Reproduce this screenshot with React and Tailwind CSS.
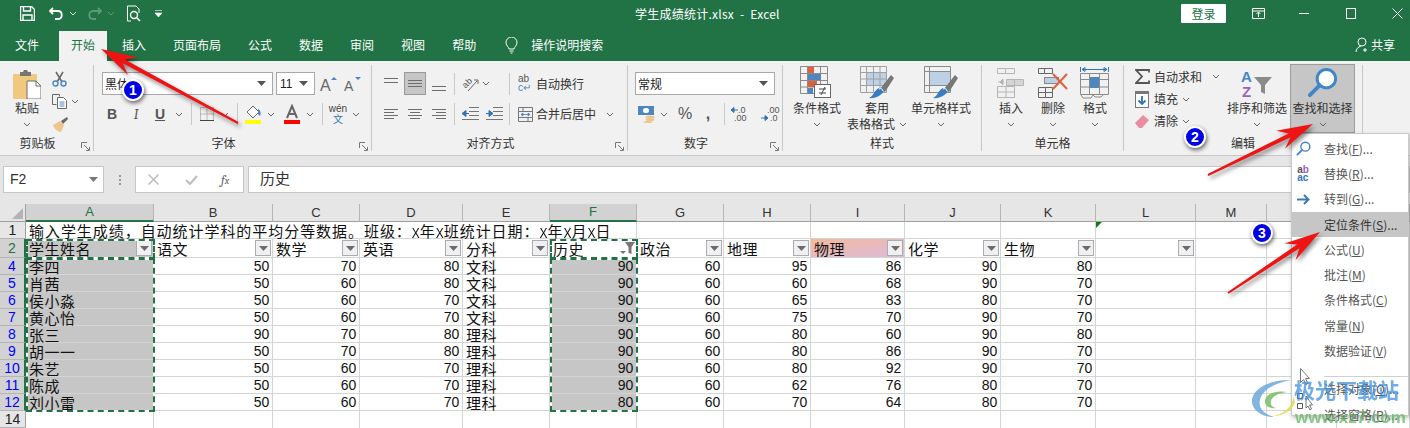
import React from 'react';

const Chev = ({ c = '#666' }) => (
  <svg width="8" height="5" viewBox="0 0 8 5"><path d="M1 1l3 3 3-3" fill="none" stroke={c} strokeWidth="1" /></svg>
);

const Tri = ({ c = '#6a6a6a' }) => (
  <svg width="9" height="5" viewBox="0 0 9 5"><path d="M0 0h9L4.500 5z" fill={c} /></svg>
);

// icon box of a fixed width, centres what is inside it
const Box = ({ w, className = '', children }) => (
  <div className={`flex items-center justify-center h-[22px] shrink-0 ${className}`} style={{ width: w }}>{children}</div>
);

const Sep = ({ className = '' }) => <div className={`w-px h-[22px] bg-[#c8c8c8] shrink-0 ${className}`} />;

const Lines = ({ rows }) => (
  <svg width="16" height="16" viewBox="0 0 16 16">
    {rows.map(([x, y, l]) => <rect key={y} x={x} y={y} width={l} height="1" fill="#6e6e6e" />)}
  </svg>
);

const Launcher = () => (
  <div className="absolute right-[3px] bottom-0">
    <svg width="9" height="9" viewBox="0 0 9 9">
      <path d="M.5 6V.5H6M3 3l5 5M5 8.500h3.500V5" fill="none" stroke="#777" />
    </svg>
  </div>
);

function Group({ w, label, launcher, children }) {
  return (
    <div className="relative flex flex-col h-[86px] border-r border-[#c6c6c6] shrink-0" style={{ width: w }}>
      <div className="flex-1 min-h-0">{children}</div>
      <div className={`h-[16px] leading-[16px] text-center text-[12px] text-[#333] pb-[2px] ${launcher ? 'pr-[18px]' : ''}`}>{label}</div>
      {launcher && <Launcher />}
    </div>
  );
}

function BigBtn({ w, icon, label, label2, className = '' }) {
  return (
    <div className={`flex flex-col items-center shrink-0 ${className}`} style={{ width: w }}>
      <div className="h-[35px] flex items-center justify-center">{icon}</div>
      <div className="h-[16px] leading-[16px] text-[12px] text-[#333] whitespace-nowrap">{label}</div>
      <div className="h-[16px] flex items-center justify-center text-[12px] leading-[16px] text-[#333] gap-[4px] whitespace-nowrap">
        {label2}
        <Chev />
      </div>
    </div>
  );
}

/* ---------- ribbon icons ---------- */
const PasteIcon = () => (
  <svg width="28" height="29" viewBox="0 0 28 29">
    <rect x="0" y="4" width="24" height="25" rx="1" fill="#f0c87e" />
    <path d="M7 4V2h3l1-2h3l1 2h3v4H7z" fill="#767676" />
    <path d="M14 11h9l5 5v13H14z" fill="#fff" stroke="#6e6e6e" />
    <path d="M23 11v5h5" fill="none" stroke="#6e6e6e" />
  </svg>
);
const ScissorsIcon = () => (
  <svg width="15" height="16" viewBox="0 0 15 16">
    <path d="M4 1l6 10M11 1L5 11" stroke="#666" strokeWidth="1.500" fill="none" />
    <circle cx="3.500" cy="12.500" r="2.500" fill="none" stroke="#4e86c0" strokeWidth="1.400" />
    <circle cx="11.500" cy="12.500" r="2.500" fill="none" stroke="#4e86c0" strokeWidth="1.400" />
  </svg>
);
const CopyIcon = () => (
  <svg width="16" height="15" viewBox="0 0 16 15">
    <path d="M.5.500h7v2M.5.500v10h4" fill="none" stroke="#666" />
    <path d="M5.500 3.500h6l3 3v8h-9z" fill="#fff" stroke="#666" />
    <path d="M7.500 8h5M7.500 10h5M7.500 12h5" stroke="#4e86c0" />
  </svg>
);
const BrushIcon = () => (
  <svg width="16" height="15" viewBox="0 0 16 15">
    <path d="M9 4L15 0l1 2-5 5z" fill="#666" />
    <path d="M1 8l7-4 4 4-3 7c-3 0-7-3-8-7z" fill="#eec58a" />
  </svg>
);
const GrowA = ({ up }) => (
  <svg className="overflow-visible" width="20" height="16" viewBox="0 0 20 16">
    <text x="1" y="15" fontSize={up ? 16 : 14} fontFamily="Liberation Sans" fill="#666">A</text>
    <path d={up ? 'M12 4l3-3 3 3z' : 'M12 1h6l-3 3z'} fill="#4e86c0" />
  </svg>
);
const FillIcon = () => (
  <svg width="17" height="20" viewBox="0 0 17 20">
    <path d="M2 8l6-6 6 6-6 6z" fill="#fff" stroke="#666" />
    <path d="M13 5c3 1 3 5 2 7l-2-2z" fill="#4e86c0" />
    <rect x="0" y="16" width="16" height="4" fill="#ffff00" />
  </svg>
);
const FontColorIcon = () => (
  <svg width="16" height="20" viewBox="0 0 16 20">
    <path d="M3 14L8 2l5 12M5 10h6" fill="none" stroke="#666" strokeWidth="2" />
    <rect x="0" y="16" width="16" height="4" fill="#ff0000" />
  </svg>
);
const BorderIcon = () => (
  <svg width="14" height="14" viewBox="0 0 14 14">
    <path d="M.5.500h13v13H.5zM7 .500v13M.5 7h13" fill="none" stroke="#888" strokeDasharray="1 1" />
    <path d="M0 13.500h14" stroke="#444" />
  </svg>
);
const OrientIcon = () => (
  <svg className="overflow-visible" width="17" height="17" viewBox="0 0 17 17">
    <text x="0" y="11" fontSize="9" fontFamily="Liberation Sans" fill="#555" transform="rotate(-45 5 8)">ab</text>
    <path d="M6 16L15 6M12 5h4v4" fill="none" stroke="#666" />
  </svg>
);
const WrapIcon = () => (
  <div className="w-[13px] h-[20px] flex flex-col text-[10px] leading-[9px] text-[#555] [font-family:'Liberation_Sans',sans-serif]">
    <span>ab</span>
    <span className="text-[#4e86c0]">c↵</span>
  </div>
);
const MergeIcon = () => (
  <svg width="15" height="15" viewBox="0 0 15 15">
    <path d="M.5.500h14v14H.5zM.5 4.500h14M.5 10.500h14M5 .500v4M10 10.500v4" fill="none" stroke="#777" />
    <path d="M3 7.500h9M3 7.500l2-1.500v3zM12 7.500l-2-1.500v3z" fill="#4e86c0" stroke="#4e86c0" strokeWidth=".8" />
  </svg>
);
const IndentIcon = ({ flip }) => (
  <svg width="17" height="14" viewBox="0 0 17 14">
    <path d="M7 .500h10M7 4.500h10M7 8.500h10M0 12.500h17" stroke="#777" />
    <path d={flip ? 'M0 6.500h5M3 3.500l4 3-4 3z' : 'M7 6.500H2M4 3.500l-4 3 4 3z'} fill="#2f74b5" stroke="#2f74b5" />
  </svg>
);
const MoneyIcon = () => (
  <svg width="17" height="17" viewBox="0 0 17 17">
    <rect x="0" y="0" width="16" height="9" fill="#4e86c0" />
    <rect x="5" y="2" width="6" height="5" rx="2.500" fill="#fff" />
    <ellipse cx="12" cy="11" rx="4.500" ry="1.500" fill="#eec58a" />
    <ellipse cx="12" cy="13.500" rx="4.500" ry="1.500" fill="#eec58a" />
    <ellipse cx="10" cy="16" rx="4.500" ry="1" fill="#eec58a" />
  </svg>
);
const DecIcon = ({ inc }) => (
  <svg className="overflow-visible" width="18" height="14" viewBox="0 0 18 14">
    <text x={inc ? 6 : 7} y="6" fontSize="9" fontFamily="Liberation Sans" fill="#555">{inc ? '.00' : '.0'}</text>
    <text x={inc ? 9 : 3} y="14" fontSize="9" fontFamily="Liberation Sans" fill="#555">{inc ? '.0' : '.00'}</text>
    {inc
      ? <path d="M0 11h5M4 8.500l3 2.500-3 2.500z" fill="#2f74b5" stroke="#2f74b5" />
      : <path d="M7 3H2M3 .500L0 3l3 2.500z" fill="#2f74b5" stroke="#2f74b5" />}
  </svg>
);
const CondIcon = () => (
  <svg width="34" height="34" viewBox="0 0 34 34">
    <path d="M.5.500h27v27H.5zM.5 7.500h27M.5 14.500h27M.5 21h27M7.500.500v27M20.500.500v27" fill="none" stroke="#8a8a8a" />
    <rect x="8" y="1" width="6" height="6" fill="#e0603e" />
    <rect x="8" y="8" width="13" height="6" fill="#4e86c0" />
    <rect x="8" y="15" width="9" height="6" fill="#e0603e" />
    <rect x="8" y="22" width="5" height="6" fill="#4e86c0" />
    <rect x="14.500" y="18.500" width="16" height="13" fill="#fff" stroke="#666" />
    <path d="M19 23h7M19 27h7M25 21l-4 8" stroke="#444" fill="none" />
  </svg>
);
const Brush2 = () => (
  <g>
    <path d="M20 23L31 9l3 3-9 14z" fill="#777" />
    <path d="M24 24c-1 5-9 9-15 8 5-2 5-8 10-10z" fill="#3a7cbf" />
    <path d="M19 23c2-1 4 0 4 2" fill="none" stroke="#fff" />
  </g>
);
const TableStyleIcon = () => (
  <svg width="34" height="33" viewBox="0 0 34 33">
    <path d="M.5.500h26v26H.5zM.5 6.500h26M.5 13h26M.5 19.500h26M6.500.500v26M13.500.500v26M20 .500v26" fill="none" stroke="#a0a0a0" />
    <rect x="7" y="7" width="19" height="12" fill="#bcd0e6" />
    <path d="M7 13h19M13.500 7v12M20 7v12" stroke="#a0a0a0" />
    <Brush2 />
  </svg>
);
const CellStyleIcon = () => (
  <svg width="34" height="33" viewBox="0 0 34 33">
    <path d="M.5.500h26v26H.5zM.5 5.500h26" fill="none" stroke="#8a8a8a" />
    <rect x="6" y="6" width="20" height="13" fill="#bcd0e6" />
    <path d="M5.500.500v26M.5 19.500h26" stroke="#8a8a8a" />
    <Brush2 />
  </svg>
);
const InsertIcon = () => (
  <svg width="28" height="30" viewBox="0 0 28 30">
    <path d="M.5.500h8v5h-8zM8.500.500h9v5h-9zM.5 18.500h17v11H.5zM9 18.500v11M.5 24h17M9.500 11.500h8v6h-8zM17.500 11.500h9v6h-9z" fill="none" stroke="#b5b5b5" />
    <rect x="10" y="12" width="7" height="5" fill="#d5d5d5" />
    <rect x="18" y="12" width="8" height="5" fill="#d5d5d5" />
    <path d="M1 14h6M3 14l3-3v6z" fill="#b5b5b5" stroke="#b5b5b5" />
  </svg>
);
const DeleteIcon = () => (
  <svg width="30" height="30" viewBox="0 0 30 30">
    <path d="M.5.500h6v5h-6zM6.500.500h8v5h-8zM.5 19.500h14v10H.5zM7.500 19.500v10M.5 24.500h14" fill="none" stroke="#666" />
    <rect x="6.500" y="9.500" width="14" height="6" fill="#bcd0e6" stroke="#888" />
    <path d="M15 6l14 15M29 6L15 21" stroke="#e0603e" strokeWidth="2" />
  </svg>
);
const FormatIcon = () => (
  <svg width="30" height="32" viewBox="0 0 30 32">
    <path d="M.5 0v5M28.500 0v5M2 2.500h25M2 2.500l3-2v4zM27 2.500l-3-2v4z" fill="none" stroke="#2f74b5" />
    <path d="M.5 6.500h28v21H.5zM.5 12.500h28M.5 20h28M9.500 6.500v21M19.500 6.500v21" fill="none" stroke="#8a8a8a" />
    <rect x="10" y="10" width="9" height="11" fill="#4e86c0" />
    <path d="M1 28l2 3h8l2-3 2 2h6l2-2" fill="none" stroke="#8a8a8a" />
  </svg>
);
const SortIcon = () => (
  <svg className="overflow-visible" width="32" height="28" viewBox="0 0 32 28">
    <text x="0" y="13" fontSize="15" fontWeight="bold" fontFamily="Liberation Sans" fill="#3f86c8">A</text>
    <text x="1" y="28" fontSize="15" fontWeight="bold" fontFamily="Liberation Sans" fill="#9a63bb">Z</text>
    <path d="M13 8h18l-7 8v9l-4-2v-7z" fill="#8a8a8a" />
  </svg>
);
const Magnifier = ({ s = 32, c = '#3f86c8' }) => (
  <svg width={s} height={s} viewBox="0 0 32 32">
    <circle cx="20" cy="12" r="9.500" fill="#fff" stroke={c} strokeWidth="3" />
    <path d="M13 19L3 29" stroke={c} strokeWidth="4" strokeLinecap="round" />
  </svg>
);

/* ---------- sheet data ---------- */
const COLS = ['A', 'B', 'C', 'D', 'E', 'F', 'G', 'H', 'I', 'J', 'K', 'L', 'M', 'N', 'O'];
const HEADS = ['学生姓名', '语文', '数学', '英语', '分科', '历史', '政治', '地理', '物理', '化学', '生物', ''];
const ROWS = [
  [4, '李四', 50, 70, 80, '文科', 90, 60, 95, 86, 90, 80],
  [5, '肖茜', 50, 60, 80, '文科', 90, 60, 60, 68, 90, 70],
  [6, '侯小淼', 50, 60, 70, '文科', 90, 60, 65, 83, 80, 70],
  [7, '黄心怡', 50, 60, 70, '文科', 90, 60, 75, 70, 90, 70],
  [8, '张三', 90, 70, 80, '理科', 90, 60, 80, 60, 90, 80],
  [9, '胡一一', 50, 70, 80, '理科', 90, 60, 80, 86, 90, 70],
  [10, '朱艺', 50, 60, 70, '理科', 90, 60, 80, 92, 90, 70],
  [11, '陈成', 50, 60, 70, '理科', 90, 60, 62, 76, 80, 70],
  [12, '刘小雷', 50, 60, 70, '理科', 80, 60, 70, 64, 80, 70],
];

const MENU = [
  ['查找', 'F', '...'], ['替换', 'R', '...'], ['转到', 'G', '...'], ['定位条件', 'S', '...'], ['公式', 'U', ''],
  ['批注', 'M', ''], ['条件格式', 'C', ''], ['常量', 'N', ''], ['数据验证', 'V', ''],
];

function FilterBtn() {
  return (
    <div className="w-[16px] h-[16px] mr-px border border-[#a9adb3] bg-[#f0f0f0] flex items-center justify-center shrink-0">
      <Tri />
    </div>
  );
}

function RowHead({ n, active, color = 'text-[#222]' }) {
  return (
    <div className={`flex items-center justify-center text-[14px] [font-family:'Liberation_Sans',sans-serif] border-b border-[#b5b5b5] ${active ? 'bg-[#d2d2d2] border-r-2 border-r-[#217346]' : 'bg-[#e6e6e6] border-r border-r-[#9f9f9f]'} ${color}`}>
      {n}
    </div>
  );
}

function Ants({ className }) {
  return (
    <div className={`absolute border-2 border-white pointer-events-none ${className}`}>
      <div className="absolute -inset-[2px] border-2 border-dashed border-[#217346]" />
    </div>
  );
}

// the sheet's font has a tall, narrow latin X
const NarrowX = () => <span className="inline-block w-[8px] text-[12px] tracking-normal scale-y-[1.25] [font-family:'Liberation_Sans',sans-serif]">X</span>;

function Sheet() {
  const cellBase = 'border-r border-b border-[#d4d4d4] min-w-0';
  return (
    <div className="relative">
      <div className="grid grid-cols-[26px_128px_119px_87px_103px_87px_87px_87px_87px_94px_96px_95px_100px_71px_70px_73px] grid-rows-[18px_17px_19px_repeat(10,17px)] text-[15px] text-[#111]">
        {/* column letters */}
        <div className="bg-[#e6e6e6] border-r border-b border-[#9f9f9f] flex items-end justify-end p-[2px]">
          <svg width="11" height="11" viewBox="0 0 11 11"><path d="M11 0v11H0z" fill="#b4b4b4" /></svg>
        </div>
        {COLS.map((c) => {
          const on = c === 'A' || c === 'F';
          return (
            <div key={c} className={`flex items-center justify-center text-[13px] [font-family:'Liberation_Sans',sans-serif] border-r border-[#b5b5b5] ${on ? 'bg-[#d2d2d2] text-[#217346] border-b-2 border-b-[#217346]' : 'bg-[#e6e6e6] text-[#333] border-b border-b-[#9f9f9f]'}`}>
              {c}
            </div>
          );
        })}

        {/* row 1, the note spills over the empty cells */}
        <RowHead n={1} />
        {COLS.map((c, i) => (
          <div key={c} className={`relative border-b border-[#d4d4d4] ${i < 5 ? '' : 'border-r'}`}>
            {i === 0 && (
              <span className="absolute left-[3px] top-0 z-10 whitespace-nowrap leading-[17px] tracking-[0.95px]">
                输入学生成绩，自动统计学科的平均分等数据。班级：<NarrowX />年<NarrowX />班统计日期：<NarrowX />年<NarrowX />月<NarrowX />日
              </span>
            )}
            {c === 'L' && <div className="absolute left-0 top-0 w-0 h-0 border-t-[6px] border-r-[6px] border-t-[#107c10] border-r-transparent" />}
          </div>
        ))}

        {/* header row */}
        <RowHead n={2} active color="text-[#217346]" />
        {COLS.map((c, i) => {
          const head = HEADS[i];
          if (i > 11 || head === undefined) return <div key={c} className={cellBase} />;
          return (
            <div key={c} className={`flex items-center justify-between pl-[3px] ${cellBase} ${i === 0 ? 'bg-[#c6c6c6]' : ''} ${c === 'I' ? 'bg-gradient-to-br from-[#f5b99a] to-[#dcbadb]' : ''}`}>
              <span className="tracking-[0.5px] leading-[17px] whitespace-nowrap">{head}</span>
              {c === 'F' ? (
                <svg className="mr-px shrink-0" width="15" height="14" viewBox="0 0 15 14">
                  <path d="M5 1h10L11.500 6v7L8.500 12V6z" fill="#777" />
                  <path d="M0 10h6l-3 3z" fill="#777" />
                </svg>
              ) : <FilterBtn />}
            </div>
          );
        })}

        {/* data rows */}
        {ROWS.map((row) => (
          <React.Fragment key={row[0]}>
            <RowHead n={row[0]} active color="text-[#0000ff]" />
            {COLS.map((c, i) => {
              const v = row[i + 1];
              const sel = c === 'A' || c === 'F';
              const isNum = typeof v === 'number';
              return (
                <div
                  key={c}
                  className={`${cellBase} leading-[17px] whitespace-nowrap ${sel ? 'bg-[#c6c6c6]' : ''} ${isNum ? "text-right pr-[3px] text-[14px] tracking-[-0.2px] [font-family:'Liberation_Sans',sans-serif]" : 'pl-[3px] tracking-[0.5px]'}`}
                >
                  {v}
                </div>
              );
            })}
          </React.Fragment>
        ))}

        {/* row 14 */}
        <RowHead n={14} />
        {COLS.map((c) => <div key={c} className="border-r border-[#d4d4d4]" />)}
      </div>

      {/* marching ants over the copied ranges */}
      <Ants className="left-[26px] top-[35px] w-[129px] h-[20px]" />
      <Ants className="left-[26px] top-[54px] w-[129px] h-[154px]" />
      <Ants className="left-[550px] top-[35px] w-[88px] h-[20px]" />
      <Ants className="left-[550px] top-[54px] w-[88px] h-[154px]" />
    </div>
  );
}

function Menu() {
  return (
    <div className="absolute left-[1291px] top-[133px] w-[118px] h-[283px] bg-white border border-[#c8c8c8] shadow-[1px_2px_4px_rgba(0,0,0,0.25)] pt-[2px] text-[12px] text-[#555] z-20">
      {MENU.map(([t, k, tail], i) => (
        <div key={k} className={`flex items-center h-[25.3px] ${i === 3 ? 'bg-[#c6c6c6]' : ''}`}>
          <div className="w-[22px] mr-[10px] flex justify-center shrink-0">
            {i === 0 && <Magnifier s={15} />}
            {i === 1 && (
              <div className="flex flex-col text-[10px] leading-[8px] font-bold [font-family:'Liberation_Sans',sans-serif]">
                <span className="text-[#555]">a<span className="text-[#9a63bb]">b</span></span>
                <span className="text-[#2f74b5]">ac</span>
              </div>
            )}
            {i === 2 && (
              <svg width="13" height="11" viewBox="0 0 13 11">
                <path d="M0 5.500h10M7 1l4.500 4.500L7 10" fill="none" stroke="#3f78b0" strokeWidth="2" />
              </svg>
            )}
          </div>
          <span className={`whitespace-nowrap ${i === 3 ? 'text-[#333]' : ''}`}>{t}(<span className="underline">{k}</span>){tail}</span>
        </div>
      ))}
      <div className="h-[12.600px]" />
      <div className="h-px bg-[#d0d0d0] ml-[32px] -mt-[0.5px]" />
      <div className="flex items-center h-[25.3px] pl-[32px] whitespace-nowrap">选择对象(<span className="underline">O</span>)...</div>
      <div className="flex items-center h-[25.3px] pl-[32px] whitespace-nowrap">选择窗格(<span className="underline">P</span>)...</div>
    </div>
  );
}

// tapered arrow with a notched head, from the tail to the tip
function Arrow({ from, to }) {
  const [x1, y1] = from;
  const [x2, y2] = to;
  const d = Math.hypot(x2 - x1, y2 - y1);
  const ux = (x2 - x1) / d;
  const uy = (y2 - y1) / d;
  const nx = -uy;
  const ny = ux;
  const pt = (along, side) => `${(x2 - ux * along + nx * side).toFixed(1)},${(y2 - uy * along + ny * side).toFixed(1)}`;
  const tail = (side) => `${(x1 + nx * side).toFixed(1)},${(y1 + ny * side).toFixed(1)}`;
  const pts = [pt(0, 0), pt(36, 10), pt(26, 2.2), tail(1), tail(-1), pt(26, -2.2), pt(36, -10)].join(' ');
  return <polygon points={pts} fill="#ee1414" />;
}

function Badge({ n, className }) {
  return (
    <div className={`absolute w-[22px] h-[22px] rounded-full bg-[#0000e6] border-2 border-white shadow-[1px_2px_4px_rgba(0,0,0,0.6)] text-white text-[14px] font-bold flex items-center justify-center [font-family:'Liberation_Sans',sans-serif] ${className}`}>
      {n}
    </div>
  );
}

export default function App() {
  return (
    <div className="relative w-[1410px] h-[428px] overflow-hidden bg-white [font-family:'Noto_Sans_CJK_SC',sans-serif]">
      {/* title bar */}
      <div className="h-[27px] bg-[#217346] flex items-center text-white">
        <div className="w-[635px] flex items-center shrink-0 pl-[20px]">
          <svg width="15" height="15" viewBox="0 0 15 15">
            <path d="M.5.500h11l3 3v11H.5z" fill="none" stroke="#fff" strokeWidth="1.400" />
            <path d="M3.500 1v4h7V1M3 14V9h9v5" fill="none" stroke="#fff" strokeWidth="1.400" />
          </svg>
          <svg className="ml-[14px]" width="15" height="13" viewBox="0 0 15 13">
            <path d="M4 1L1 4l3 3M1 4h8c5 0 5 8 0 8H6" fill="none" stroke="#fff" strokeWidth="1.800" />
          </svg>
          <div className="ml-[5px]"><Chev c="#cfe3d7" /></div>
          <svg className="ml-[10px]" width="15" height="13" viewBox="0 0 15 13">
            <path d="M11 1l3 3-3 3M14 4H6c-5 0-5 8 0 8h3" fill="none" stroke="#5d9a78" strokeWidth="1.800" />
          </svg>
          <div className="ml-[5px]"><Chev c="#5d9a78" /></div>
          <svg className="ml-[11px]" width="15" height="17" viewBox="0 0 15 17">
            <path d="M10 1H1.500v15H5M10 1l3 3v4" fill="none" stroke="#fff" />
            <circle cx="8" cy="10" r="3.500" fill="none" stroke="#fff" strokeWidth="1.400" />
            <path d="M10.500 12.500L14 16" stroke="#fff" strokeWidth="1.600" />
          </svg>
          <svg className="ml-[14px]" width="7" height="8" viewBox="0 0 7 8">
            <path d="M0 .500h7M0 3h7L3.500 7z" fill="#fff" stroke="#fff" strokeWidth=".6" />
          </svg>
        </div>
        <div className="text-[12px] whitespace-pre tracking-[0.25px]">学生成绩统计.xlsx  -  Excel</div>
        <div className="ml-auto flex items-center pr-[7px]">
          <div className="w-[45px] h-[19px] bg-white text-[#217346] text-[12px] leading-[19px] text-center rounded-[1px]">登录</div>
          <svg className="ml-[26px]" width="13" height="11" viewBox="0 0 13 11">
            <path d="M.5.500h12v10H.5zM.5 3h12M6.500 9V4.500M4.500 6l2-2 2 2" fill="none" stroke="#fff" />
          </svg>
          <div className="ml-[34px] w-[10px] h-px bg-white" />
          <div className="ml-[37px] w-[10px] h-[11px] border border-white" />
          <svg className="ml-[36px]" width="11" height="11" viewBox="0 0 11 11">
            <path d="M.5.500l10 10M10.500.500l-10 10" stroke="#fff" />
          </svg>
        </div>
      </div>

      {/* tabs */}
      <div className="h-[34px] bg-[#217346] flex items-end text-[12px] text-white">
        <div className="flex gap-[3px] items-end">
          <div className="px-[12px] ml-[3px] mr-[5px] h-[30px] leading-[28px]">文件</div>
          <div className="px-[12px] h-[30px] leading-[28px] bg-[#f1f1f1] text-[#217346]">开始</div>
          {['插入', '页面布局', '公式', '数据', '审阅', '视图', '帮助'].map((t) => (
            <div key={t} className="px-[12px] h-[30px] leading-[28px]">{t}</div>
          ))}
        </div>
        <div className="flex items-center h-[30px] pb-[2px] ml-[17px]">
          <svg width="13" height="17" viewBox="0 0 13 17">
            <path d="M4 12c0-2-3-3-3-6.500a5.500 5.500 0 0 1 11 0C12 9 9 10 9 12zM4.500 14h4M5.500 16h2" fill="none" stroke="#fff" />
          </svg>
          <span className="ml-[13px]">操作说明搜索</span>
        </div>
        <div className="ml-auto flex items-center h-[30px] pb-[2px] pr-[15px]">
          <svg width="14" height="16" viewBox="0 0 14 16">
            <circle cx="7" cy="5" r="4" fill="none" stroke="#fff" />
            <path d="M1 15c0-3 2-5 5-6M10 11v4M8 13h4" fill="none" stroke="#fff" />
          </svg>
          <span className="ml-[2px]">共享</span>
        </div>
      </div>

      {/* ribbon */}
      <div className="h-[95px] bg-[#f1f1f1] flex pt-[4px] border-b border-[#c6c6c6]">
        <Group w={94} label="剪贴板" launcher>
          <div className="flex pl-[15px]">
            <div className="w-[24px] flex flex-col items-center">
              <div className="h-[35px] pt-[5px]"><PasteIcon /></div>
              <div className="h-[16px] leading-[16px] text-[12px] text-[#333] whitespace-nowrap">粘贴</div>
              <div className="h-[16px] flex items-center"><Chev /></div>
            </div>
            <div className="ml-[13px] flex flex-col pt-[2px]">
              <div className="h-[23px] flex items-center"><ScissorsIcon /></div>
              <div className="h-[23px] flex items-center gap-[3px]"><CopyIcon /><Chev /></div>
              <div className="h-[23px] flex items-center"><BrushIcon /></div>
            </div>
          </div>
        </Group>

        <Group w={278} label="字体" launcher>
          <div className="flex items-center pl-[8px] pt-[7px]">
            <div className="w-[171px] h-[23px] bg-white border border-[#a8a8a8] flex items-center justify-between pl-[2px] pr-[6px] text-[12px] text-[#222]">
              <span>黑体</span><Tri c="#555" />
            </div>
            <div className="ml-[3px] w-[39px] h-[23px] bg-white border border-[#a8a8a8] flex items-center justify-between pl-[3px] pr-[6px] text-[12px] text-[#222] [font-family:'Liberation_Sans',sans-serif]">
              <span>11</span><Tri c="#555" />
            </div>
            <Box w={24} className="ml-[2px]"><GrowA up /></Box>
            <Box w={24}><GrowA /></Box>
          </div>
          <div className="flex items-center pl-[6px] mt-[8px] [font-family:'Liberation_Sans',sans-serif] text-[14px] text-[#555]">
            <Box w={24} className="font-bold">B</Box>
            <Box w={24} className="italic font-serif">I</Box>
            <Box w={24} className="font-bold underline">U</Box>
            <Box w={14}><Chev /></Box>
            <Sep className="ml-[5px]" />
            <Box w={24} className="ml-[3px]"><BorderIcon /></Box>
            <Box w={14} className="-ml-px"><Chev /></Box>
            <Sep className="ml-[5px]" />
            <Box w={24} className="ml-[3px]"><FillIcon /></Box>
            <Box w={14} className="-ml-px"><Chev /></Box>
            <Box w={24} className="ml-[2px]"><FontColorIcon /></Box>
            <Box w={14} className="-ml-px"><Chev /></Box>
            <Sep className="ml-[5px]" />
            <Box w={24} className="ml-[3px]">
              <div className="flex flex-col items-center text-[10px] leading-[10px]">
                <span className="text-[#444]">wén</span>
                <span className="text-[#2f74b5] [font-family:'Noto_Sans_CJK_SC',sans-serif]">文</span>
              </div>
            </Box>
            <Box w={14} className="-ml-px"><Chev /></Box>
          </div>
        </Group>

        <Group w={256} label="对齐方式" launcher>
          <div className="flex items-center pl-[7px] pt-[7px] h-[30px] text-[12px] text-[#333]">
            <Box w={24}><Lines rows={[[1, 2, 14], [1, 6, 14]]} /></Box>
            <div className="ml-px w-[22px] h-[23px] bg-[#c6c6c6] border border-[#999] flex items-center justify-center shrink-0">
              <Lines rows={[[1, 4, 14], [1, 7, 14], [1, 10, 14]]} />
            </div>
            <Box w={24} className="ml-px"><Lines rows={[[1, 10, 14], [1, 14, 14]]} /></Box>
            <Sep className="ml-[3px]" />
            <Box w={24} className="ml-[3px]"><OrientIcon /></Box>
            <Box w={14} className="-ml-[3px]"><Chev /></Box>
            <Sep className="ml-[16px]" />
            <div className="ml-[8px] w-[14px] shrink-0"><WrapIcon /></div>
            <span className="ml-[4px] whitespace-nowrap">自动换行</span>
          </div>
          <div className="flex items-center pl-[7px] mt-[8px] h-[22px] text-[12px] text-[#333]">
            <Box w={24}><Lines rows={[[1, 3, 14], [1, 6, 10], [1, 9, 14], [1, 12, 10]]} /></Box>
            <Box w={24}><Lines rows={[[1, 3, 14], [3, 6, 10], [1, 9, 14], [3, 12, 10]]} /></Box>
            <Box w={24}><Lines rows={[[1, 3, 14], [5, 6, 10], [1, 9, 14], [5, 12, 10]]} /></Box>
            <Sep className="ml-[3px]" />
            <Box w={24} className="ml-[3px]"><IndentIcon /></Box>
            <Box w={24}><IndentIcon flip /></Box>
            <Sep className="ml-[3px]" />
            <div className="ml-[8px] shrink-0 flex"><MergeIcon /></div>
            <span className="ml-[3px] whitespace-nowrap">合并后居中</span>
            <Box w={14} className="ml-[7px]"><Chev /></Box>
          </div>
        </Group>

        <Group w={155} label="数字" launcher>
          <div className="pl-[7px] pt-[7px]">
            <div className="w-[140px] h-[23px] bg-white border border-[#a8a8a8] flex items-center justify-between pl-[2px] pr-[6px] text-[12px] text-[#222]">
              <span>常规</span><Tri c="#555" />
            </div>
          </div>
          <div className="flex items-center pl-[6px] mt-[8px] text-[#555]">
            <Box w={24}><MoneyIcon /></Box>
            <Box w={14} className="-ml-px"><Chev /></Box>
            <Box w={24} className="ml-[2px] text-[16px] [font-family:'Liberation_Sans',sans-serif]">%</Box>
            <Box w={24} className="-ml-px text-[16px] font-bold [font-family:'Liberation_Sans',sans-serif]">,</Box>
            <Sep className="ml-[4px]" />
            <Box w={24} className="ml-[3px]"><DecIcon /></Box>
            <Box w={24} className="ml-[6px]"><DecIcon inc /></Box>
          </div>
        </Group>

        <Group w={199} label="样式">
          <div className="flex pl-[7px]">
            <BigBtn w={54} icon={<CondIcon />} label="条件格式" />
            <BigBtn w={62} className="ml-[2px]" icon={<TableStyleIcon />} label="套用" label2="表格格式" />
            <BigBtn w={60} className="ml-[3px]" icon={<CellStyleIcon />} label="单元格样式" />
          </div>
        </Group>

        <Group w={142} label="单元格">
          <div className="flex pl-[8px]">
            <BigBtn w={42} icon={<InsertIcon />} label="插入" />
            <BigBtn w={42} icon={<DeleteIcon />} label="删除" />
            <BigBtn w={42} icon={<FormatIcon />} label="格式" />
          </div>
        </Group>

        <Group w={239} label="编辑">
          <div className="flex">
            <div className="w-[103px] shrink-0 pl-[11px] text-[12px] text-[#333] flex flex-col">
              <div className="h-[23px] flex items-center">
                <svg width="15" height="15" viewBox="0 0 15 15"><path d="M14 3.500V1H1l6 6.500L1 14h13v-2.500" fill="none" stroke="#555" strokeWidth="1.800" /></svg>
                <span className="ml-[4px]">自动求和</span>
                <div className="ml-[10px]"><Chev /></div>
              </div>
              <div className="h-[22px] flex items-center">
                <svg width="14" height="17" viewBox="0 0 14 17">
                  <rect x=".5" y=".5" width="13" height="16" fill="#fff" stroke="#777" />
                  <rect x="0" y="0" width="14" height="3" fill="#777" />
                  <path d="M7 5v8M3.500 9.500L7 13l3.500-3.500" fill="none" stroke="#2f74b5" strokeWidth="1.800" />
                </svg>
                <span className="ml-[5px]">填充</span>
                <div className="ml-[4px]"><Chev /></div>
              </div>
              <div className="h-[22px] flex items-center">
                <svg width="14" height="13" viewBox="0 0 14 13"><path d="M0 8l8-8 6 5-7 8H4z" fill="#e88ea0" /></svg>
                <span className="ml-[5px]">清除</span>
                <div className="ml-[4px]"><Chev /></div>
              </div>
            </div>
            <BigBtn w={60} icon={<SortIcon />} label="排序和筛选" />
            <div className="ml-[3px] -mt-px w-[65px] h-[69px] bg-[#c6c6c6] border border-[#9c9c9c] shrink-0 flex flex-col items-center">
              <div className="h-[35px] flex items-center justify-center"><Magnifier s={31} /></div>
              <div className="h-[16px] leading-[16px] text-[12px] text-[#333] whitespace-nowrap">查找和选择</div>
              <div className="h-[16px] flex items-center"><Chev /></div>
            </div>
          </div>
        </Group>
      </div>

      {/* formula bar */}
      <div className="h-[48px] bg-[#e6e6e6] flex items-start pt-[10px]">
        <div className="ml-[3px] w-[101px] h-[27px] bg-white border border-[#c6c6c6] flex items-center justify-between pl-[6px] pr-[5px] text-[14px] text-[#333] [font-family:'Liberation_Sans',sans-serif]">
          <span>F2</span><Tri c="#777" />
        </div>
        <div className="w-[31px] h-[27px] flex flex-col items-center justify-center gap-[2px]">
          <i className="w-[2px] h-[2px] bg-[#999]" /><i className="w-[2px] h-[2px] bg-[#999]" /><i className="w-[2px] h-[2px] bg-[#999]" />
        </div>
        <div className="w-[109px] h-[27px] bg-white border border-[#c6c6c6] flex items-center pl-[12px]">
          <svg width="11" height="11" viewBox="0 0 11 11"><path d="M.5.500l10 10M10.500.500l-10 10" stroke="#bdbdbd" strokeWidth="1.500" /></svg>
          <svg className="ml-[26px]" width="13" height="10" viewBox="0 0 13 10"><path d="M1 5l4 4 7-8" fill="none" stroke="#bdbdbd" strokeWidth="2" /></svg>
          <span className="ml-[23px] text-[13px] text-[#666] italic font-serif">f<span className="text-[10px]">x</span></span>
        </div>
        <div className="ml-[4px] flex-1 h-[27px] bg-white border border-[#c6c6c6] pl-[11px] text-[15px] leading-[22px] text-[#333]">历史</div>
      </div>

      <Sheet />
      <Menu />

      {/* callouts drawn over the screenshot */}
      <svg className="absolute inset-0 z-30 pointer-events-none drop-shadow-[2px_3px_2px_rgba(0,0,0,0.45)]" width="1410" height="428">
        <Arrow from={[238, 123]} to={[101, 49]} />
        <Arrow from={[1208, 175]} to={[1313, 124]} />
        <Arrow from={[1228, 293]} to={[1320, 232]} />
      </svg>
      <Badge n={1} className="left-[122px] top-[79px] z-30" />
      <Badge n={2} className="left-[1184px] top-[126px] z-30" />
      <Badge n={3} className="left-[1251px] top-[222px] z-30" />

      {/* site watermark and the pointer glyphs under it */}
      <svg className="absolute left-[1297px] top-[368px] z-30" width="16" height="50" viewBox="0 0 16 50">
        <path d="M3.500 .500v14l3-3 2.500 5 2-1-2.500-5h4z" fill="#fff" stroke="#777" />
        <path d="M.5 25.500h5v5h-5zM.5 35.500h5v5h-5z" fill="none" stroke="#555" />
        <path d="M9 28v12l2-2 2 4 1.500-1-2-4h3z" fill="#fff" stroke="#777" />
      </svg>
      <svg className="absolute left-[1251px] top-[379px] z-30" width="44" height="40" viewBox="0 0 44 40">
        <path d="M40 1C20 0 2 9 1 21c-1 10 10 17 22 17-10-3-16-9-14-17C11 11 24 4 40 1z" fill="#6ba7d8" opacity=".85" />
        <path d="M36 13c-10-2-20 1-22 8-1 6 5 9 11 8-4-1-6-3-5-7 1-5 8-8 16-9z" fill="#7cc06a" opacity=".9" />
        <path d="M42 16c1 10-8 19-20 21 7 1 20-5 22-14z" fill="#e2d85a" opacity=".9" />
      </svg>
      <div className="absolute left-[1294px] top-[374px] z-30 text-[21px] leading-[30px] font-bold text-[#3f8fdc] opacity-75 whitespace-nowrap">极光下载站</div>
      <div className="absolute left-[1295px] top-[408px] z-30 text-[17px] leading-[20px] font-bold text-[#63b863] opacity-75 whitespace-nowrap [font-family:'Liberation_Sans',sans-serif]">www.xz7.com</div>
    </div>
  );
}
